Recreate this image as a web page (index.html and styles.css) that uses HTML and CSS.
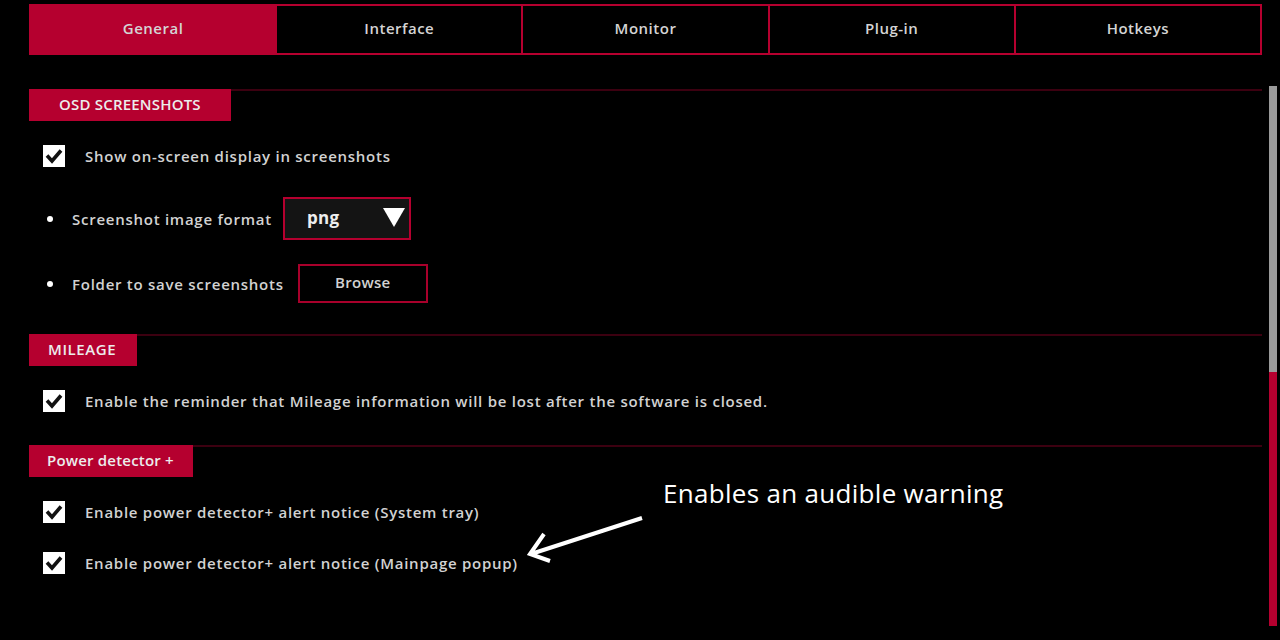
FILE: index.html
```html
<!DOCTYPE html>
<html lang="en">
<head>
    <meta charset="UTF-8">
    <title>Settings - General</title>
    <link rel="stylesheet" href="styles.css">
</head>
<body>

    <div class="tabs">
        <div class="tab active">General</div>
        <div class="tab">Interface</div>
        <div class="tab">Monitor</div>
        <div class="tab">Plug-in</div>
        <div class="tab">Hotkeys</div>
    </div>

    <div class="content">
        <div class="sections">
            <!-- OSD screenshots -->
            <div class="section osd">
                <div class="section-label">OSD SCREENSHOTS</div>
                <div class="row check-row">
                    <span class="checkbox"><svg viewBox="0 0 22 22"><path d="M4 10.5 L9 16 L18 5.5" /></svg></span>
                    Show on-screen display in screenshots
                </div>
                <div class="row bullet-row format-row">
                    <span class="bullet"></span>
                    Screenshot image format
                    <div class="dropdown">
                        <span>png</span>
                        <svg class="arrow-down" viewBox="0 0 22 19"><polygon points="0,0 22,0 11,19" /></svg>
                    </div>
                </div>
                <div class="row bullet-row folder-row">
                    <span class="bullet"></span>
                    Folder to save screenshots
                    <div class="browse">Browse</div>
                </div>
            </div>

            <!-- Mileage -->
            <div class="section mileage">
                <div class="section-label">MILEAGE</div>
                <div class="row check-row">
                    <span class="checkbox"><svg viewBox="0 0 22 22"><path d="M4 10.5 L9 16 L18 5.5" /></svg></span>
                    Enable the reminder that Mileage information will be lost after the software is closed.
                </div>
            </div>

            <!-- Power detector -->
            <div class="section power">
                <div class="section-label">Power detector +</div>
                <div class="row check-row">
                    <span class="checkbox"><svg viewBox="0 0 22 22"><path d="M4 10.5 L9 16 L18 5.5" /></svg></span>
                    Enable power detector+ alert notice (System tray)
                </div>
                <div class="row check-row second">
                    <span class="checkbox"><svg viewBox="0 0 22 22"><path d="M4 10.5 L9 16 L18 5.5" /></svg></span>
                    Enable power detector+ alert notice (Mainpage popup)
                </div>
            </div>
        </div>

        <div class="scrollbar">
            <div class="thumb"></div>
            <div class="track"></div>
        </div>
    </div>

    <!-- annotation over the screenshot -->
    <div class="note">Enables an audible warning</div>
    <svg class="note-arrow" width="130" height="60" viewBox="0 0 130 60">
        <path d="M116 4 L5 40 M18 20 L4 40 L24 47" />
    </svg>

</body>
</html>
```

FILE: styles.css
```css
body {
    font-family: "Open Sans", "Liberation Sans", sans-serif;
    background-color: #000;
    color: #d2d2d2;
    margin: 0;
    padding: 0;
    width: 1280px;
    height: 640px;
    overflow: hidden;
    position: relative;
}
.tabs {
    display: grid;
    grid-template-columns: repeat(5, 1fr);
    gap: 2px;
    background-color: #b5002f;
    padding: 2px;
    width: 1233px;
    box-sizing: border-box;
    height: 51px;
    margin: 4px 0 0 29px;
}
.tab {
    background-color: #000;
    display: flex;
    align-items: center;
    justify-content: center;
    padding-bottom: 4px;
    font-size: 15px;
    font-weight: 600;
    letter-spacing: 0.5px;
    color: #d4d4d4;
}
.tab.active {
    background-color: #b5002f;
}
.content {
    display: flex;
    margin-left: 29px;
}
.sections {
    width: 1233px;
}
.section {
    border-top: 2px solid #3c0010;
    display: flex;
    flex-direction: column;
    align-items: flex-start;
}
.osd {
    margin-top: 34px;
    padding-bottom: 31px;
}
.mileage {
    padding-bottom: 33px;
}
.section-label {
    background-color: #b5002f;
    color: #ececec;
    font-size: 15px;
    font-weight: 600;
    letter-spacing: 0.2px;
    height: 32px;
    line-height: 30px;
    padding: 0 19px 0 18px;
    margin-top: -2px;
}
.osd .section-label {
    padding: 0 30px 0 30px;
}
.mileage .section-label {
    letter-spacing: 0.6px;
    padding: 0 21px 0 19px;
}
.row {
    display: flex;
    align-items: center;
    font-size: 15px;
    font-weight: 600;
    letter-spacing: 0.74px;
}
.check-row {
    height: 22px;
    margin-top: 24px;
    padding-left: 14px;
}
.check-row.second {
    margin-top: 29px;
}
.checkbox {
    width: 22px;
    height: 22px;
    background-color: #fff;
    margin-right: 20px;
    display: flex;
}
.checkbox svg {
    width: 22px;
    height: 22px;
}
.checkbox path {
    fill: none;
    stroke: #111;
    stroke-width: 3.6;
}
.bullet-row {
    padding-left: 18px;
}
.bullet {
    width: 6px;
    height: 6px;
    border-radius: 50%;
    background-color: #fff;
    margin-right: 19px;
}
.format-row {
    margin-top: 30px;
    height: 43px;
}
.folder-row {
    margin-top: 24px;
    height: 39px;
}
.dropdown {
    width: 128px;
    height: 43px;
    box-sizing: border-box;
    border: 2px solid #b5002f;
    background-color: #141414;
    margin-left: 11px;
    display: flex;
    align-items: center;
    justify-content: space-between;
    padding: 0 4px 2px 22px;
    font-size: 17px;
    font-weight: 700;
    letter-spacing: 0.3px;
    color: #eee;
}
.arrow-down {
    width: 22px;
    height: 19px;
    fill: #fff;
}
.browse {
    width: 130px;
    height: 39px;
    box-sizing: border-box;
    border: 2px solid #a8002b;
    margin-left: 14px;
    display: flex;
    align-items: center;
    justify-content: center;
    padding-bottom: 3px;
    font-size: 15px;
    font-weight: 600;
    letter-spacing: 0.3px;
}
.scrollbar {
    width: 8px;
    margin: 31px 0 0 7px;
    height: 540px;
    display: flex;
    flex-direction: column;
}
.thumb {
    height: 286px;
    background-color: #9a9a9a;
}
.track {
    flex: 1;
    background-color: #b5002f;
}
.note {
    position: absolute;
    left: 663px;
    top: 475px;
    font-size: 26px;
    letter-spacing: 0.3px;
    color: #fff;
    white-space: nowrap;
}
.note-arrow {
    position: absolute;
    left: 526px;
    top: 514px;
}
.note-arrow path {
    fill: none;
    stroke: #fff;
    stroke-width: 4;
}
```
